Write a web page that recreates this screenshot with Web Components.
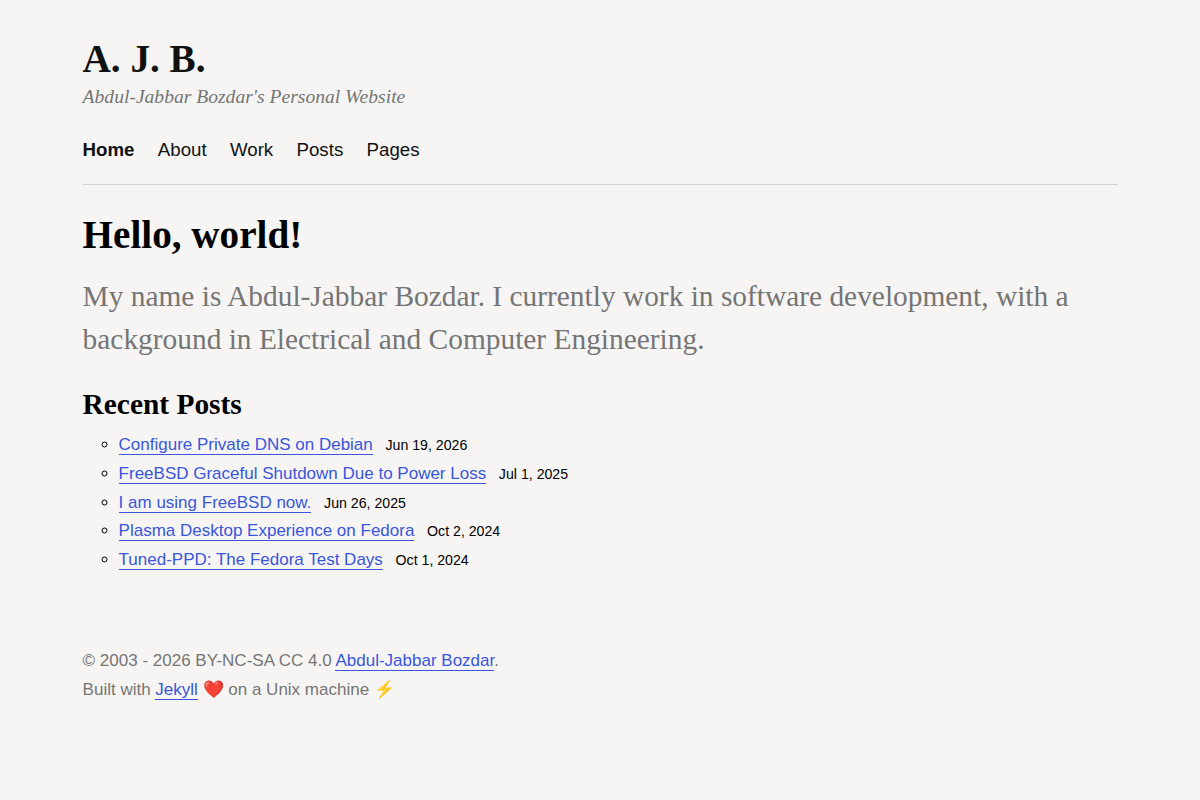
<!DOCTYPE html>
<html lang="en"><head><meta charset="utf-8"><title>A. J. B.</title>
<style>
body{margin:0;background:#f6f5f4;color:#000;font:17.008px/28.8px "Liberation Sans",sans-serif}
</style></head><body>
<site-page></site-page>
<script>
const define=(name,html)=>customElements.define(name,class extends HTMLElement{
  constructor(){super();this.attachShadow({mode:'open'}).innerHTML=html;}
});
define('site-link',`<style>:host{display:inline}a{color:#3956dc;text-decoration:none;border-bottom:1px solid currentColor}</style><a href="#"><slot></slot></a>`);
define('site-header',`<style>
:host{display:block;border-bottom:1px solid #d4d3d2;height:184px;box-sizing:content-box}
h1{margin:0;padding-top:36px;font:bold 39.15px/46px "Liberation Serif",serif;color:#111}
p{margin:0;padding-top:1px;font:italic 19.58px/28px "Liberation Serif",serif;color:#757575}
nav{display:flex;gap:23.3px;padding-top:24px;font-size:18.7px;line-height:29px;color:#111}
a{color:inherit;text-decoration:none}.on{font-weight:bold}
</style><h1>A. J. B.</h1><p>Abdul-Jabbar Bozdar's Personal Website</p><nav><a class="on" href="#">Home</a><a href="#">About</a><a href="#">Work</a><a href="#">Posts</a><a href="#">Pages</a></nav>`);
define('post-item',`<style>:host{display:list-item;list-style:circle;height:28.8px}small{font-size:14.17px;margin-left:12.7px;line-height:1}</style><site-link><slot></slot></site-link><small><slot name="date"></slot></small>`);
define('site-main',`<style>
:host{display:block}
h1{margin:0;padding-top:27px;font:bold 39.15px/46px "Liberation Serif",serif}
.intro{margin:0;padding-top:17px;font:29.4px/43px "Liberation Serif",serif;color:#757575}
h2{margin:0;padding-top:25px;font:bold 29.4px/36px "Liberation Serif",serif}
section{padding:9px 0 0 36px}
</style><h1>Hello, world!</h1><p class="intro">My name is Abdul-Jabbar Bozdar. I currently work in software development, with a background in Electrical and Computer Engineering.</p><h2>Recent Posts</h2><section>
<post-item>Configure Private DNS on Debian<span slot="date">Jun 19, 2026</span></post-item>
<post-item>FreeBSD Graceful Shutdown Due to Power Loss<span slot="date">Jul 1, 2025</span></post-item>
<post-item>I am using FreeBSD now.<span slot="date">Jun 26, 2025</span></post-item>
<post-item>Plasma Desktop Experience on Fedora<span slot="date">Oct 2, 2024</span></post-item>
<post-item>Tuned-PPD: The Fedora Test Days<span slot="date">Oct 1, 2024</span></post-item></section>`);
define('site-footer',`<style>:host{display:block;padding-top:72px;color:#757575}div{height:29px}</style><div>© 2003 - 2026 BY-NC-SA CC 4.0 <site-link>Abdul-Jabbar Bozdar</site-link>.</div><div>Built with <site-link>Jekyll</site-link> ❤️ on a Unix machine ⚡</div>`);
define('site-page',`<style>:host{display:block;margin:0 82px 0 82.6px}</style><site-header></site-header><site-main></site-main><site-footer></site-footer>`);
</script></body></html>
